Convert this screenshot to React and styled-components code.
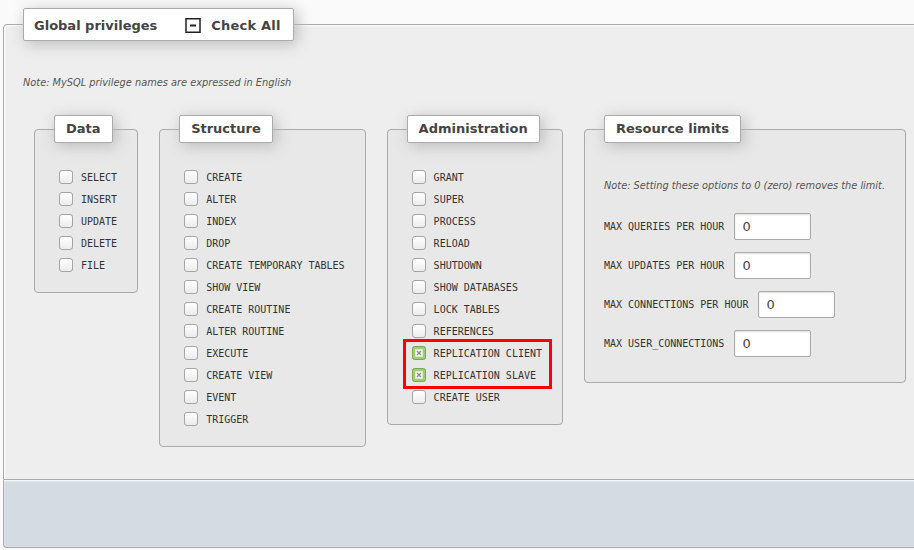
import React from 'react';
import styled, { createGlobalStyle } from 'styled-components';

const GlobalStyle = createGlobalStyle`
  html, body {
    margin: 0;
    padding: 0;
    background: #fafafa;
    overflow: hidden;
  }
  body {
    font-family: "DejaVu Sans", sans-serif;
    color: #444;
  }
`;

const Page = styled.div`
  width: 914px;
  height: 550px;
  overflow: hidden;
  padding-top: 8px;
  box-sizing: border-box;
`;

const OuterSet = styled.fieldset`
  width: 960px;
  margin: 0 0 0 3px;
  padding: 0 19px 32px 19px;
  border: 1px solid #aaa;
  border-radius: 4px 4px 0 0;
  background: #eee;
  box-shadow: 1px 1px 2px #fff inset;
  box-sizing: border-box;
`;

const Legend = styled.legend`
  display: flex;
  align-items: center;
  font-weight: bold;
  font-size: 13px;
  color: #444;
  padding: ${p => (p.$big ? '9px 12px 7px 10px' : '5px 11px 6px 11px')};
  border: 1px solid #aaa;
  border-radius: 2px;
  background: #fff;
  box-shadow: 3px 3px 15px #bbb;
  line-height: 15px;
`;

const CheckAll = styled.span`
  display: inline-flex;
  align-items: center;
  gap: 10px;
  margin-left: 28px;
  letter-spacing: 0.2px;
`;

const Note = styled.p`
  margin: ${p => p.$margin || '0'};
  font-size: 9.8px;
  font-style: italic;
  color: #555;
  line-height: 14px;
  white-space: nowrap;
`;

const Groups = styled.div`
  display: flex;
  align-items: flex-start;
  gap: 21px;
  margin: 25px 0 0 11px;
`;

const Group = styled.fieldset`
  margin: 0;
  padding: 23px 20px ${p => p.$bottom || '16px'} 19px;
  border: 1px solid #aaa;
  border-radius: 4px;
  background: #e8e8e8;
  box-sizing: border-box;
`;

const List = styled.div`
  padding-left: 5px;
`;

const Row = styled.div`
  display: flex;
  align-items: center;
  gap: 8px;
  height: 22px;
`;

const Box = styled.span`
  width: 14px;
  height: 14px;
  box-sizing: border-box;
  border: 1px solid #a5a5a5;
  border-radius: 3px;
  background: linear-gradient(#fff, #ececec);
  flex: none;
`;

const Code = styled.span`
  font-family: "DejaVu Sans Mono", monospace;
  font-size: 10px;
  color: #333;
  white-space: nowrap;
`;

const Highlight = styled.div`
  border: 3px solid #f00;
  margin: -3px -10px -3px -9px;
  padding: 0 7px 0 6px;
`;

const LimitRow = styled.div`
  display: flex;
  align-items: center;
  gap: 10px;
  margin-top: ${p => (p.$first ? '20px' : '12px')};
`;

const Input = styled.input`
  width: 77px;
  height: 27px;
  box-sizing: border-box;
  border: 1px solid #aaa;
  border-radius: 2px;
  background: #fff;
  padding: 0 7px;
  font-family: "DejaVu Sans", sans-serif;
  font-size: 13px;
  color: #444;
  box-shadow: 0 1px 2px #ddd inset;
`;

const Footer = styled.div`
  width: 960px;
  height: 67px;
  margin-left: 3px;
  border: 1px solid #aaa;
  border-top: none;
  border-radius: 0 0 0 4px;
  background: #d4dbe3;
  box-shadow: 0 1px 2px #fff inset;
`;

const MinusIcon = () => (
  <svg width="16" height="15" viewBox="0 0 16 15">
    <rect x="1" y="0.75" width="14" height="13.5" fill="#fff" stroke="#222" strokeWidth="1.5" />
    <rect x="5" y="6.5" width="6" height="2" fill="#222" />
  </svg>
);

const CheckedBox = () => (
  <svg width="14" height="14" viewBox="0 0 14 14" style={{ flex: 'none' }}>
    <rect x="0.5" y="0.5" width="13" height="13" rx="2" fill="#9fcb72" stroke="#7aa94f" />
    <rect x="3.5" y="3.5" width="7" height="7" fill="#f4f4f4" stroke="#dfe9d2" />
    <path d="M5 5 L9 9 M9 5 L5 9" stroke="#8c8c8c" strokeWidth="1.3" />
  </svg>
);

const Priv = ({ name, checked }) => (
  <Row>
    {checked ? <CheckedBox /> : <Box />}
    <Code>{name}</Code>
  </Row>
);

const data = ['SELECT', 'INSERT', 'UPDATE', 'DELETE', 'FILE'];
const structure = [
  'CREATE', 'ALTER', 'INDEX', 'DROP', 'CREATE TEMPORARY TABLES', 'SHOW VIEW',
  'CREATE ROUTINE', 'ALTER ROUTINE', 'EXECUTE', 'CREATE VIEW', 'EVENT', 'TRIGGER',
];
const adminTop = ['GRANT', 'SUPER', 'PROCESS', 'RELOAD', 'SHUTDOWN', 'SHOW DATABASES', 'LOCK TABLES', 'REFERENCES'];
const limits = ['MAX QUERIES PER HOUR', 'MAX UPDATES PER HOUR', 'MAX CONNECTIONS PER HOUR', 'MAX USER_CONNECTIONS'];

const App = () => {
  return (
    <Page>
      <GlobalStyle />
      <OuterSet>
        <Legend $big>
          Global privileges
          <CheckAll>
            <MinusIcon />
            Check All
          </CheckAll>
        </Legend>
        <Note $margin="35px 0 0 0">Note: MySQL privilege names are expressed in English</Note>
        <Groups>
          <Group>
            <Legend>Data</Legend>
            <List>
              {data.map(n => <Priv key={n} name={n} />)}
            </List>
          </Group>
          <Group>
            <Legend>Structure</Legend>
            <List>
              {structure.map(n => <Priv key={n} name={n} />)}
            </List>
          </Group>
          <Group>
            <Legend>Administration</Legend>
            <List>
              {adminTop.map(n => <Priv key={n} name={n} />)}
              <Highlight>
                <Priv name="REPLICATION CLIENT" checked />
                <Priv name="REPLICATION SLAVE" checked />
              </Highlight>
              <Priv name="CREATE USER" />
            </List>
          </Group>
          <Group $bottom="25px">
            <Legend>Resource limits</Legend>
            <Note $margin="13px 0 0 0">Note: Setting these options to 0 (zero) removes the limit.</Note>
            {limits.map((n, i) => (
              <LimitRow key={n} $first={i === 0}>
                <Code>{n}</Code>
                <Input defaultValue="0" />
              </LimitRow>
            ))}
          </Group>
        </Groups>
      </OuterSet>
      <Footer />
    </Page>
  );
};

export default App;
